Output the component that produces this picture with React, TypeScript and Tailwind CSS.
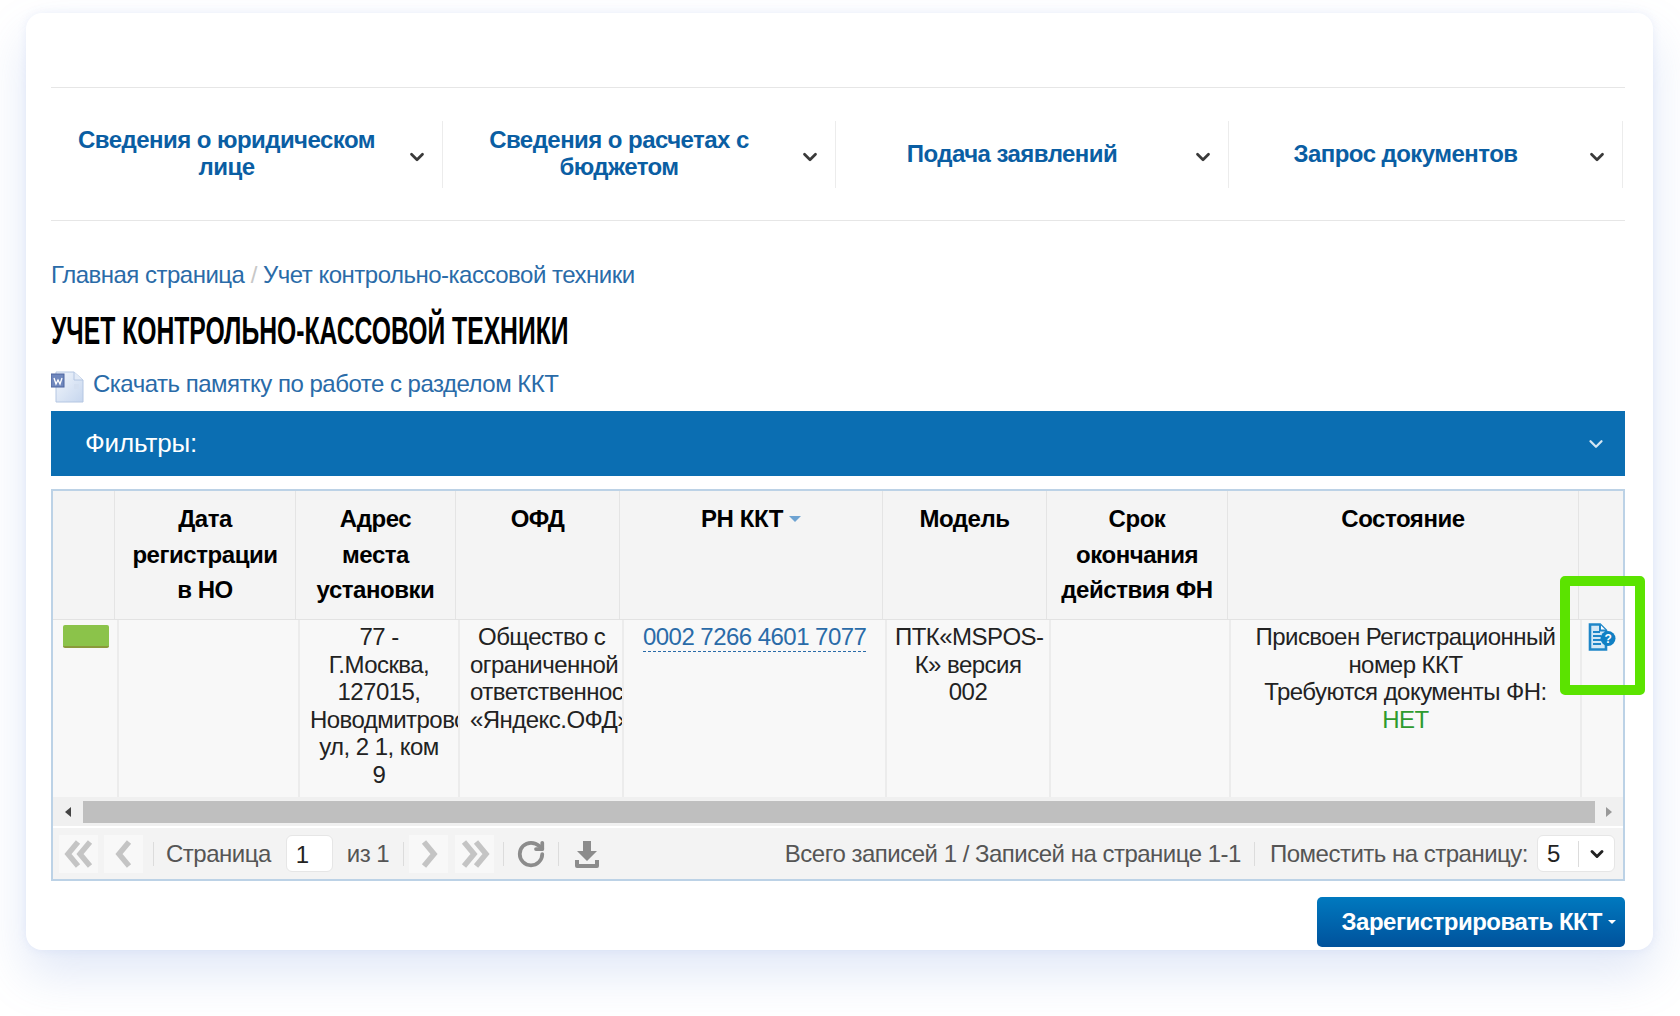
import { ChevronDown, RotateCw } from 'lucide-react'

const font = 'font-["Liberation_Sans",Arial,sans-serif]'

const navItems = [
  { label: 'Сведения о юридическом лице', w: 'w-[392px]' },
  { label: 'Сведения о расчетах с бюджетом', w: 'w-[393px]' },
  { label: 'Подача заявлений', w: 'w-[393px]' },
  { label: 'Запрос документов', w: 'w-[394px]' },
]

const columns = 'grid-cols-[62px_181px_160px_164px_263px_164px_181px_351px_1fr]'
const bodyColumns = 'grid-cols-[66px_181px_160px_164px_263px_164px_180px_351px_1fr]'

function ChevronsPair({ flip, double }: { flip?: boolean; double?: boolean }) {
  return (
    <svg width="34" height="30" viewBox="0 0 34 30" className={flip ? 'rotate-180' : ''} fill="none" stroke="#c4c4c4" strokeWidth="5.5" strokeLinejoin="miter">
      {double ? (
        <>
          <path d="M16 3 6 15l10 12" />
          <path d="M28 3 18 15l10 12" />
        </>
      ) : (
        <path d="M22 3 12 15l10 12" />
      )}
    </svg>
  )
}

function PagerButton({ flip, double }: { flip?: boolean; double?: boolean }) {
  return (
    <div className="w-[39px] h-[38px] bg-[#f8f8f8] flex items-center justify-center">
      <ChevronsPair flip={flip} double={double} />
    </div>
  )
}

function Sep() {
  return <div className="w-px h-[24px] bg-[#dcdcdc]" />
}

function WordIcon() {
  return (
    <svg width="34" height="32" viewBox="0 0 34 32" className="mt-[6px] shrink-0">
      <defs>
        <linearGradient id="sheet" x1="0" y1="0" x2="1" y2="1">
          <stop offset="0" stopColor="#f2f6fc" />
          <stop offset="1" stopColor="#c6d6ee" />
        </linearGradient>
      </defs>
      <path d="M5 1h18l9 8v22H5z" fill="url(#sheet)" stroke="#b4c6e2" />
      <path d="M23 1v8h9" fill="#e3ebf7" stroke="#b4c6e2" />
      <rect x="0" y="3" width="13" height="13" fill="#6f87bd" stroke="#4d659f" />
      <path d="M3 7l2 6 2-4 2 4 2-6" fill="none" stroke="#fff" strokeWidth="1.3" />
      <rect x="23" y="13" width="5" height="5" fill="#d4dff0" />
    </svg>
  )
}

function DocHelpIcon() {
  return (
    <svg width="28" height="28" viewBox="0 0 28 28">
      <path d="M2 1.5h10l6 6v19H2z" fill="#d4e8f6" stroke="#1f86c8" strokeWidth="2.6" />
      <path d="M12 1.5v6h6" fill="#fff" stroke="#1f86c8" strokeWidth="2" />
      <path d="M5 9h7M5 13h8M5 17h8M5 21h8" stroke="#1f86c8" strokeWidth="1.8" />
      <circle cx="20" cy="15.5" r="7.5" fill="#1180c4" />
      <text x="20" y="20" textAnchor="middle" fontSize="12" fontWeight="700" fill="#fff" fontFamily="Liberation Sans">?</text>
    </svg>
  )
}

export default function App() {
  return (
    <div className={`${font} w-[1680px] h-[1016px] bg-white pt-[13px] px-[26px] overflow-hidden`}>
      <div className="relative w-[1627px] h-[937px] bg-white rounded-2xl pl-[25px] pr-[28px] pt-[74px] shadow-[0_24px_48px_rgba(120,150,220,0.22),0_0_10px_rgba(120,150,220,0.12)]">
        {/* menu */}
        <nav className="flex h-[134px] items-center border-y border-[#e6e6e6]">
          {navItems.map((item) => (
            <div key={item.label} className={`${item.w} h-[67px] flex items-center border-r border-[#ececec] pr-[14px]`}>
              <span className="flex-1 pb-[2px] text-center text-[24px] leading-[27px] tracking-[-0.55px] font-bold text-[#0a5ea3]">{item.label}</span>
              <ChevronDown size={22} strokeWidth={3} className="text-[#3a3a3a] ml-[4px] mt-[6px] shrink-0" />
            </div>
          ))}
        </nav>

        {/* breadcrumb and title */}
        <div className="mt-[40px] text-[24px] leading-[28px] tracking-[-0.5px] text-[#2a6ba8]">
          Главная страница <span className="text-[#c8c8c8]">/</span> Учет контрольно-кассовой техники
        </div>
        <h1 className='mt-[22px] text-[38px] leading-[40px] font-bold text-black origin-left scale-x-[0.65] whitespace-nowrap font-["Liberation_Sans_Narrow","Liberation_Sans",sans-serif]'>
          УЧЕТ КОНТРОЛЬНО-КАССОВОЙ ТЕХНИКИ
        </h1>
        <div className="mt-[17px] h-[32px] flex items-center gap-[8px] text-[24px] tracking-[-0.5px] text-[#2a6ba8]">
          <WordIcon />
          <span>Скачать памятку по работе с разделом ККТ</span>
        </div>

        {/* filters */}
        <div className="mt-[11px] h-[65px] bg-[#0b6eb2] flex items-center justify-between pl-[34px] pr-[18px] text-white text-[26px] tracking-[-0.15px]">
          <span>Фильтры:</span>
          <ChevronDown size={22} strokeWidth={2.5} className="text-[#d5e6f3]" />
        </div>

        {/* grid */}
        <div className="mt-[13px] h-[392px] border-2 border-[#bcd2e6] bg-[#f8f8f8] flex flex-col">
          <div className={`grid ${columns} h-[129px] bg-[#f4f4f4] border-b border-[#e2e2e2] text-[24px] tracking-[-0.45px] leading-[35.5px] font-bold text-black text-center`}>
            <div className="border-r border-[#e4e4e4]" />
            <div className="border-r border-[#e4e4e4] pt-[10px] px-3">Дата регистрации в НО</div>
            <div className="border-r border-[#e4e4e4] pt-[10px] px-4">Адрес места установки</div>
            <div className="border-r border-[#e4e4e4] pt-[10px]">ОФД</div>
            <div className="border-r border-[#e4e4e4] pt-[10px] flex justify-center gap-[6px]">
              <span>РН ККТ</span>
              <span className="mt-[15px] w-0 h-0 border-x-[6px] border-t-[6px] border-x-transparent border-t-[#6ea3d2]" />
            </div>
            <div className="border-r border-[#e4e4e4] pt-[10px]">Модель</div>
            <div className="border-r border-[#e4e4e4] pt-[10px] px-3">Срок окончания действия ФН</div>
            <div className="border-r border-[#e4e4e4] pt-[10px]">Состояние</div>
            <div />
          </div>

          <div className={`grid ${bodyColumns} h-[177px] text-[24px] tracking-[-0.54px] leading-[27.5px] text-[#222] text-center`}>
            <div className="border-r-2 border-[#ececec] pt-[5px] pl-[10px]">
              <div className="w-[46px] h-[23px] rounded-[2px] bg-[#8bc34a] border-b-2 border-[#8a9a3a]" />
            </div>
            <div className="border-r-2 border-[#ececec]" />
            <div className="border-r-2 border-[#ececec] overflow-hidden whitespace-nowrap pt-[3px]">
              <div>77 -</div>
              <div>Г.Москва,</div>
              <div>127015,</div>
              <div className="text-left pl-[10px]">Новодмитровская</div>
              <div>ул, 2 1, ком</div>
              <div>9</div>
            </div>
            <div className="border-r-2 border-[#ececec] overflow-hidden whitespace-nowrap pt-[3px]">
              <div className="text-left pl-[18px]">Общество с</div>
              <div className="text-left pl-[10px]">ограниченной</div>
              <div className="text-left pl-[10px]">ответственностью</div>
              <div className="text-left pl-[10px]">«Яндекс.ОФД»</div>
            </div>
            <div className="border-r-2 border-[#ececec] pt-[3px] text-left pl-[19px]">
              <span className="text-[#2a6ba8] border-b border-dashed border-[#2a6ba8] pb-[1px] whitespace-nowrap">0002 7266 4601 7077</span>
            </div>
            <div className="border-r-2 border-[#ececec] pt-[3px] px-2">ПТК«MSPOS-К» версия 002</div>
            <div className="border-r-2 border-[#ececec]" />
            <div className="border-r-2 border-[#ececec] pt-[3px] whitespace-nowrap">
              <div>Присвоен Регистрационный</div>
              <div>номер ККТ</div>
              <div>Требуются документы ФН:</div>
              <div className="text-[#2e9b2e]">НЕТ</div>
            </div>
            <div className="pt-[3px] pl-[6px]">
              <DocHelpIcon />
            </div>
          </div>

          {/* horizontal scrollbar */}
          <div className="h-[29px] bg-[#f0f0f0] flex items-center">
            <span className="w-[30px] flex justify-center">
              <span className="w-0 h-0 border-y-[5px] border-r-[6px] border-y-transparent border-r-[#444]" />
            </span>
            <div className="flex-1 h-[22px] bg-[#bfbfbf]" />
            <span className="w-[28px] flex justify-center">
              <span className="w-0 h-0 border-y-[5px] border-l-[6px] border-y-transparent border-l-[#999]" />
            </span>
          </div>

          {/* pager */}
          <div className="flex-1 flex items-center pl-[6px] pr-[8px] bg-[#f3f3f3] border-t-2 border-white text-[24px] tracking-[-0.5px] text-[#555]">
            <PagerButton double />
            <div className="w-[6px]" />
            <PagerButton />
            <div className="w-[10px]" />
            <Sep />
            <span className="ml-[12px] mr-[15px]">Страница</span>
            <div className="w-[47px] h-[37px] bg-white border border-[#e6e6e6] rounded-md pl-[9px] leading-[37px] text-[#222]">1</div>
            <span className="ml-[14px] mr-[14px]">из 1</span>
            <Sep />
            <div className="w-[5px]" />
            <PagerButton flip />
            <div className="w-[7px]" />
            <PagerButton flip double />
            <div className="w-[9px]" />
            <Sep />
            <div className="w-[38px] flex justify-center mx-[8px]">
              <RotateCw size={30} strokeWidth={3} className="text-[#8c8c8c]" />
            </div>
            <Sep />
            <svg width="28" height="28" viewBox="0 0 28 28" className="ml-[14px]" fill="#8c8c8c">
              <path d="M10 1h8v10h6L14 21 4 11h6z" />
              <path d="M2 20h4v4h16v-4h4v6a2 2 0 0 1-2 2H4a2 2 0 0 1-2-2z" />
            </svg>
            <span className="ml-auto">Всего записей 1 / Записей на странице 1-1</span>
            <div className="w-[13px]" />
            <Sep />
            <span className="ml-[15px] mr-[9px]">Поместить на страницу:</span>
            <div className="w-[78px] h-[37px] bg-white border border-[#e6e6e6] rounded-md flex items-center text-[#222]">
              <span className="w-[40px] pl-[9px]">5</span>
              <div className="w-px h-[26px] bg-[#dcdcdc]" />
              <ChevronDown size={20} strokeWidth={3.5} className="ml-[8px] text-[#222]" />
            </div>
          </div>
        </div>

        <div className="mt-[16px] flex justify-end">
          <button className="w-[308px] h-[50px] rounded-[5px] bg-gradient-to-b from-[#0079bf] to-[#00529c] text-white font-bold text-[24px] tracking-[-0.5px] flex items-center justify-end pr-[9px] gap-[6px]">
            Зарегистрировать ККТ
            <span className="w-0 h-0 border-x-[4px] border-t-[4px] border-x-transparent border-t-white" />
          </button>
        </div>

        {/* highlight frame around the document icon */}
        <div className="absolute left-[1534px] top-[563px] w-[85px] h-[119px] border-[10px] border-[#5be300] rounded-[5px]" />
      </div>
    </div>
  )
}
